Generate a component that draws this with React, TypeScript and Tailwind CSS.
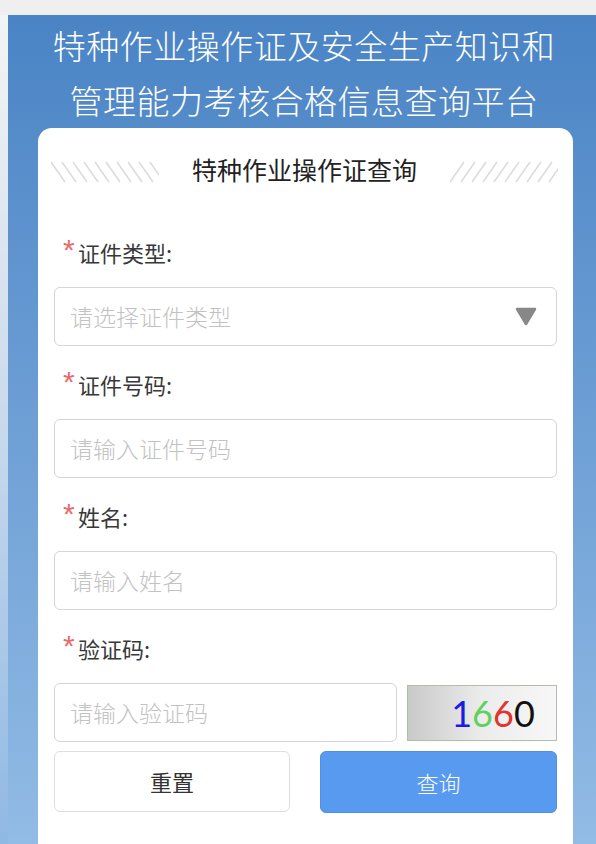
import React from "react";

const font = { fontFamily: '"Noto Sans CJK SC", "Noto Sans", sans-serif' };

function Hatch({ dir }: { dir: "left" | "right" }) {
  const lines = [];
  for (let i = 0; i < 10; i++) {
    const x = i * 11;
    if (dir === "left") {
      lines.push(<line key={i} x1={x} y1={2} x2={x + 14} y2={22} stroke="#dcdcdc" strokeWidth={1.6} />);
    } else {
      lines.push(<line key={i} x1={x + 14} y1={2} x2={x} y2={22} stroke="#dcdcdc" strokeWidth={1.6} />);
    }
  }
  return (
    <svg width="108" height="24" viewBox="0 0 108 24">
      {lines}
    </svg>
  );
}

function Label({ text }: { text: string }) {
  return (
    <div className="pl-[9px] h-[28px] flex items-center text-[22px] leading-[28px] text-[#383838] -mt-[2px]">
      <span
        className="text-[#e86a6a] text-[30px] leading-none relative -top-[2px] w-[15px]"
        style={{ fontFamily: '"Liberation Sans", Arial, sans-serif' }}
      >
        *
      </span>
      <span>{text}</span>
    </div>
  );
}

function Input({ placeholder, className = "" }: { placeholder: string; className?: string }) {
  return (
    <div
      className={`h-[59px] border border-[#d4d4d4] rounded-[6px] flex items-center pl-[15px] text-[23px] font-light text-[#c2c2c2] ${className}`}
    >
      {placeholder}
    </div>
  );
}

export default function App() {
  return (
    <div className="w-[596px] h-[844px] overflow-hidden bg-[#f0f0f0] flex flex-col" style={font}>
      <div className="h-[15px] bg-[#efefef] shrink-0" />
      <div className="flex flex-1 min-h-0">
        <div className="w-[8px] shrink-0 bg-gradient-to-b from-[#f4f4f4] via-[#c8d9ec] to-[#8fb8e3]" />
        <div className="flex-1 flex flex-col bg-gradient-to-b from-[#4a84c5] to-[#92bbe5]">
          <div className="pt-[3px] pl-[4px] text-white text-[33px] leading-[55px] text-center tracking-[0.5px] font-light">
            <div>特种作业操作证及安全生产知识和</div>
            <div>管理能力考核合格信息查询平台</div>
          </div>
          <div className="ml-[30px] w-[535px] flex-1 bg-white rounded-t-[14px] px-[16px]">
            <div className="h-[80px] flex items-center justify-between pt-[2px]">
              <div className="mt-[6px] -ml-[3px]">
                <Hatch dir="left" />
              </div>
              <div className="text-[25px] text-[#222] leading-none">特种作业操作证查询</div>
              <div className="mt-[6px] -mr-[1px]">
                <Hatch dir="right" />
              </div>
            </div>
            <div className="pt-[32px] flex flex-col">
              <Label text="证件类型:" />
              <div className="mt-[21px] h-[59px] border border-[#d4d4d4] rounded-[6px] flex items-center justify-between pl-[15px] pr-[19px] text-[23px] font-light text-[#c2c2c2]">
                <span>请选择证件类型</span>
                <svg width="22" height="19" viewBox="0 0 22 19">
                  <path d="M2 2 L20 2 L11 17 Z" fill="#888" stroke="#888" strokeWidth="2.5" strokeLinejoin="round" />
                </svg>
              </div>
              <div className="mt-[26px]">
                <Label text="证件号码:" />
              </div>
              <Input placeholder="请输入证件号码" className="mt-[21px]" />
              <div className="mt-[26px]">
                <Label text="姓名:" />
              </div>
              <Input placeholder="请输入姓名" className="mt-[21px]" />
              <div className="mt-[26px]">
                <Label text="验证码:" />
              </div>
              <div className="mt-[21px] flex items-center gap-[10px]">
                <Input placeholder="请输入验证码" className="w-[343px]" />
                <div className="w-[150px] h-[56px] border border-[#a9c3a4] bg-gradient-to-r from-[#c9c9c9] via-[#ececec] to-[#f7f7f7] flex items-center justify-center">
                  <span
                    className="text-[36px] leading-none pl-[22px]"
                    style={{ fontFamily: '"Lato", "Open Sans", sans-serif' }}
                  >
                    <span className="text-[#1c1ce0]">1</span>
                    <span className="text-[#5fd15f]">6</span>
                    <span className="text-[#e0342f]">6</span>
                    <span className="text-[#111]">0</span>
                  </span>
                </div>
              </div>
              <div className="mt-[9px] flex justify-between">
                <div className="w-[236px] h-[61px] border border-[#dedede] rounded-[6px] bg-white flex items-center justify-center text-[22px] text-[#333]">
                  重置
                </div>
                <div className="w-[237px] h-[62px] border border-[#4f8fe8] rounded-[6px] bg-[#589aef] flex items-center justify-center text-[22px] text-white font-light">
                  查询
                </div>
              </div>
            </div>
          </div>
        </div>
      </div>
    </div>
  );
}
